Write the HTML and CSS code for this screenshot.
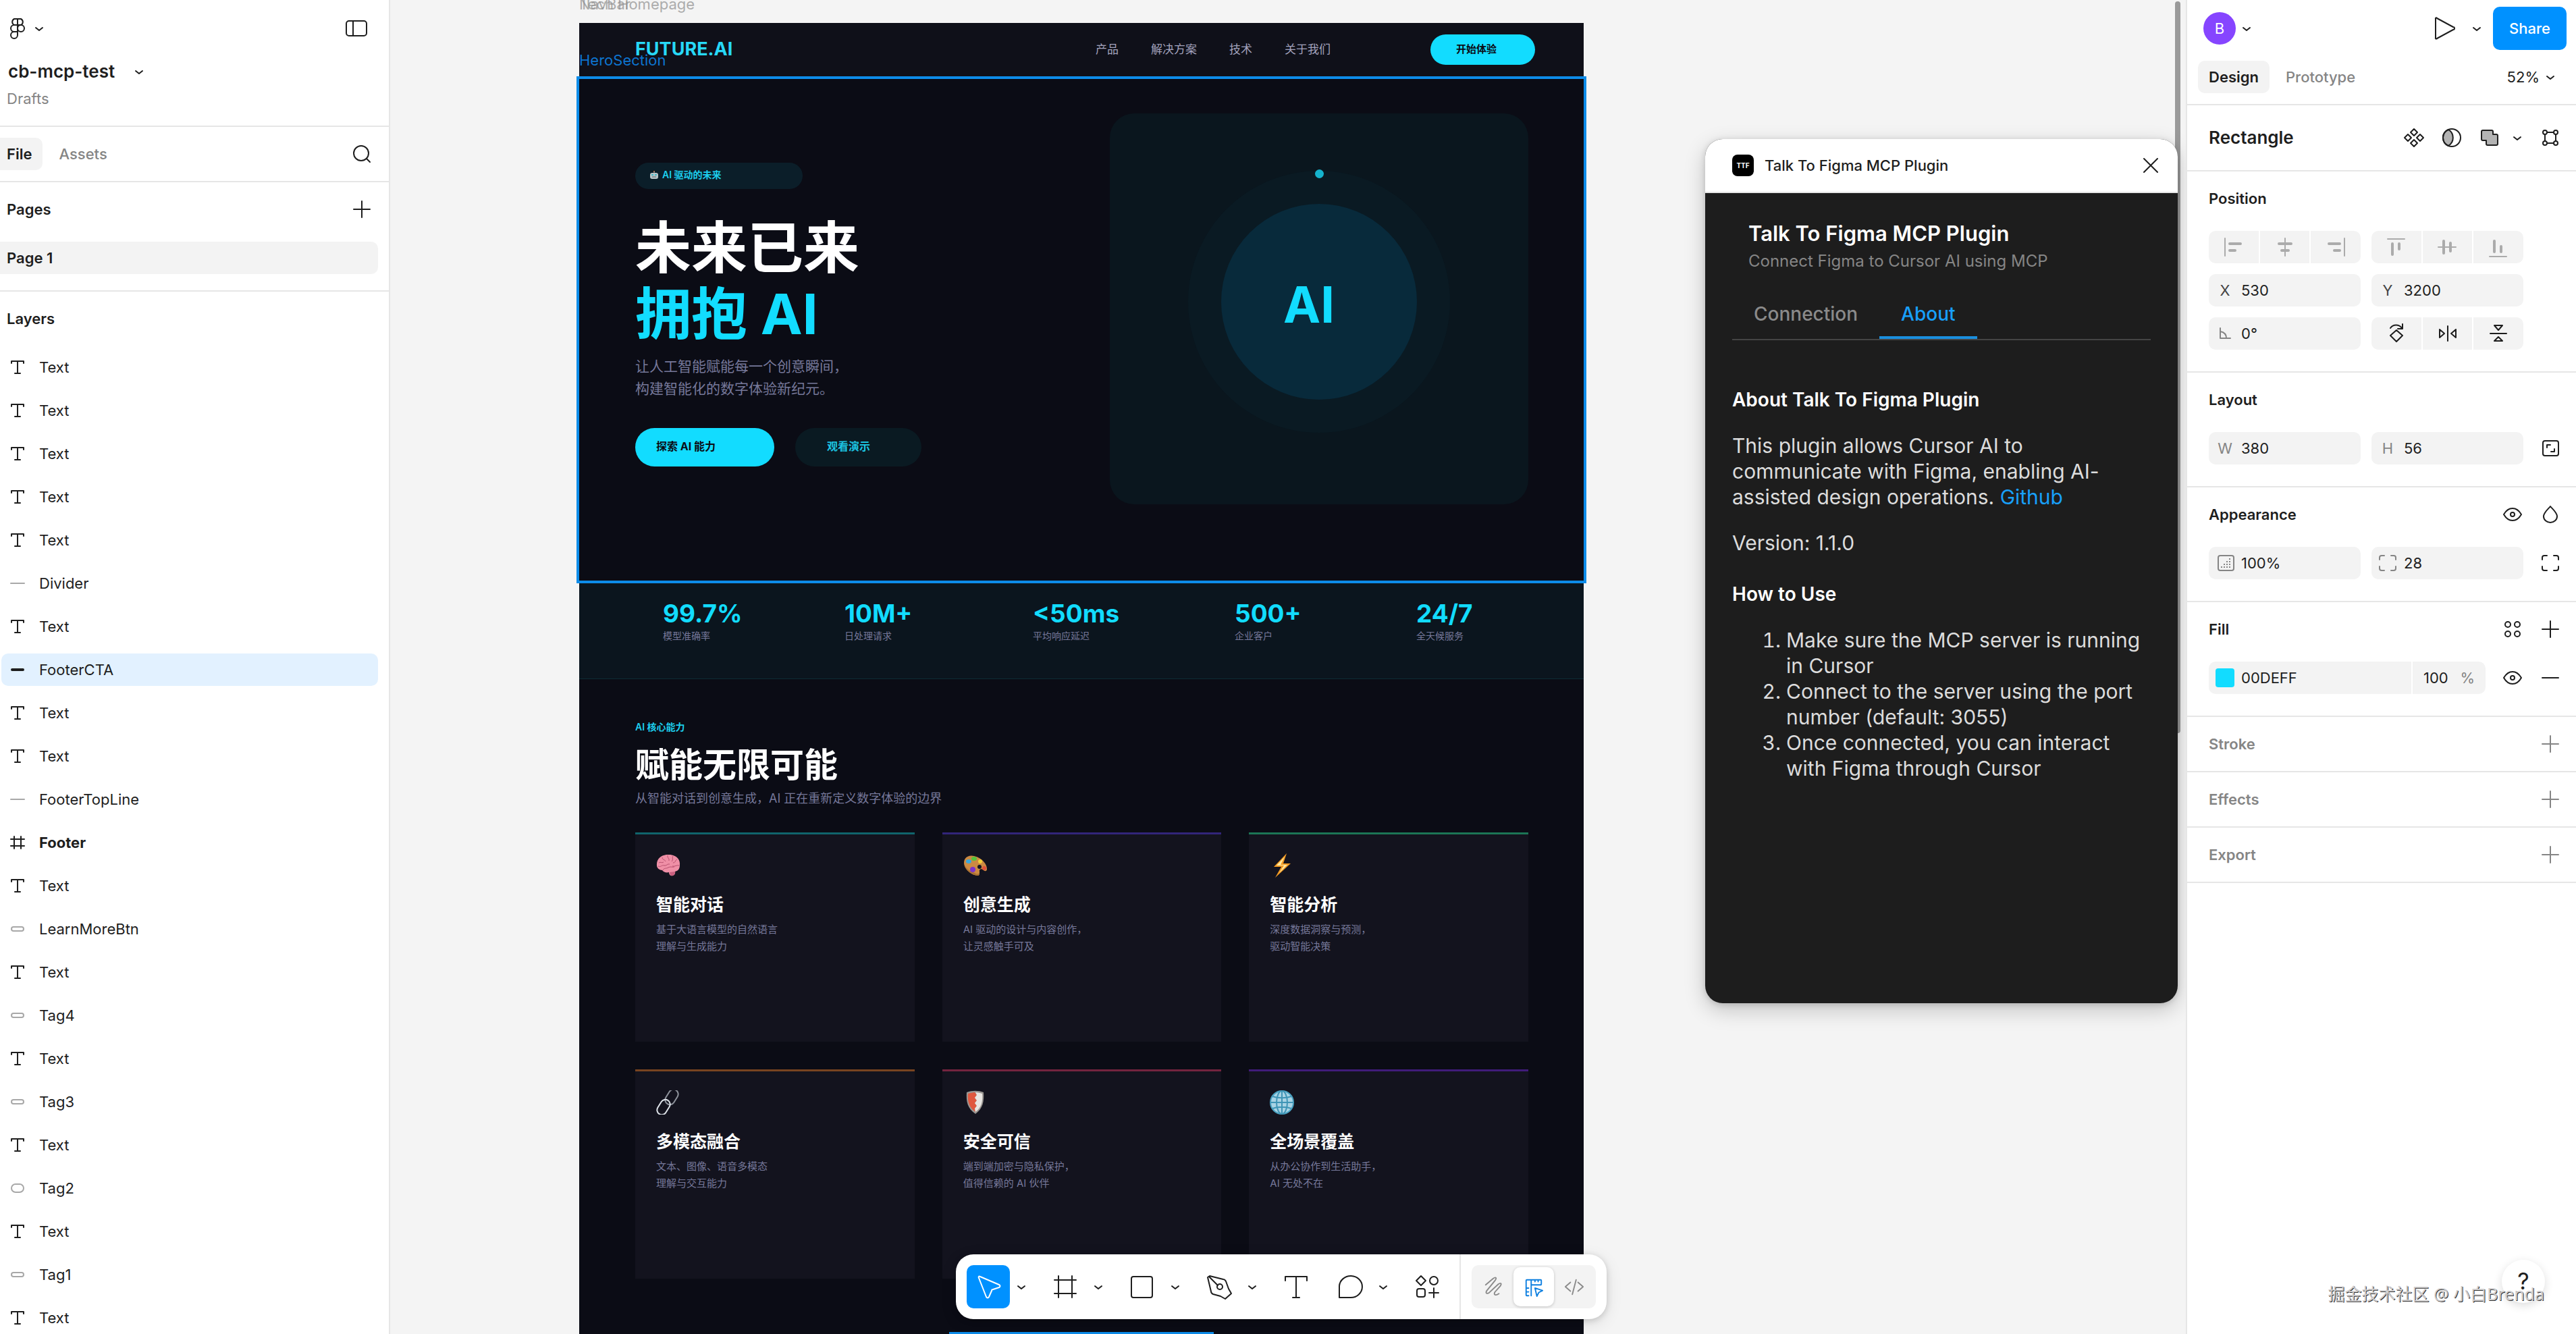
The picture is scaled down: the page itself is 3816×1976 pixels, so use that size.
FILE: index.html
```html
<!DOCTYPE html>
<html lang="zh-Hans">
<head>
  <meta charset="UTF-8">
  <title>cb-mcp-test</title>
  <link rel="stylesheet" href="styles.css">
</head>
<body>
  <svg class="sprite" aria-hidden="true">
    <symbol id="chevron" viewBox="0 0 32 32"><path d="M11 15l5 4 5-4"/></symbol>
    <symbol id="plus" viewBox="0 0 48 48"><path d="M24 12v24M12 24h24"/></symbol>
    <symbol id="minus" viewBox="0 0 48 48"><path d="M12 24h24"/></symbol>
    <symbol id="close" viewBox="0 0 48 48"><path d="M14 14l20 20M34 14L14 34"/></symbol>
    <symbol id="search" viewBox="0 0 48 48"><circle cx="23" cy="23" r="11"/><path d="M31 31l5 5"/></symbol>
    <symbol id="sidebar" viewBox="0 0 48 48"><rect x="9" y="13" width="30" height="22" rx="4"/><path d="M19 13v22"/></symbol>
    <symbol id="figma" viewBox="0 0 48 48"><path d="M24 10h-5a5 5 0 0 0 0 9h5zM24 10h5a5 5 0 0 1 0 9h-5zM24 19h-5a5 5 0 0 0 0 10h5zM24 29h-5a5 5 0 1 0 5 5z"/><circle cx="29" cy="24" r="5"/></symbol>

    <symbol id="l-text" viewBox="0 0 24 24"><path d="M3 6V3h18v3M12 3v18M8 21h8"/></symbol>
    <symbol id="l-line" viewBox="0 0 24 24"><path d="M2 12h20"/></symbol>
    <symbol id="l-bar" viewBox="0 0 24 24"><rect x="3" y="11" width="18" height="2" rx="1" fill="currentColor"/></symbol>
    <symbol id="l-pill" viewBox="0 0 24 24"><rect x="3" y="9" width="18" height="6" rx="3"/></symbol>
    <symbol id="l-round" viewBox="0 0 24 24"><rect x="3" y="6" width="18" height="12" rx="6"/></symbol>
    <symbol id="l-frame" viewBox="0 0 24 24"><path d="M7 3v18M17 3v18M2 7h20M2 17h20"/></symbol>

    <symbol id="component" viewBox="0 0 48 48"><path d="M24 11l5 5-5 5-5-5zM15 19l5 5-5 5-5-5zM33 19l5 5-5 5-5-5zM24 27l5 5-5 5-5-5z"/></symbol>
    <symbol id="mask" viewBox="0 0 48 48"><path class="soft" d="M19 12a13 13 0 0 0 0 24 14 14 0 0 0 0-24z"/><circle cx="24" cy="24" r="13"/></symbol>
    <symbol id="union" viewBox="0 0 48 48"><path class="soft" d="M14 13h13a2 2 0 0 1 2 2v4h5a2 2 0 0 1 2 2v12a2 2 0 0 1-2 2H21a2 2 0 0 1-2-2v-5h-5a2 2 0 0 1-2-2V15a2 2 0 0 1 2-2z"/></symbol>
    <symbol id="edit" viewBox="0 0 48 48"><circle cx="16" cy="16" r="3"/><circle cx="32" cy="16" r="3"/><circle cx="16" cy="32" r="3"/><circle cx="32" cy="32" r="3"/><path d="M19 16h10M19 32h10M16 19v10M32 19v10"/></symbol>
    <symbol id="al-left" viewBox="0 0 48 48"><path d="M11 11v26"/><path class="thick" d="M18 19h16M18 29h8"/></symbol>
    <symbol id="al-center" viewBox="0 0 48 48"><path d="M24 11v26"/><path class="thick" d="M15 19h18M19 29h10"/></symbol>
    <symbol id="al-right" viewBox="0 0 48 48"><path d="M37 11v26"/><path class="thick" d="M14 19h16M22 29h8"/></symbol>
    <symbol id="al-top" viewBox="0 0 48 48"><path d="M11 12h25"/><path class="thick" d="M18 19v16M28 19v8"/></symbol>
    <symbol id="al-middle" viewBox="0 0 48 48"><path d="M10 24h26"/><path class="thick" d="M18 15v18M28 18v12"/></symbol>
    <symbol id="al-bottom" viewBox="0 0 48 48"><path d="M11 38h25"/><path class="thick" d="M18 15v16M28 23v8"/></symbol>
    <symbol id="angle" viewBox="0 0 48 48"><path d="M17 16v15h15M17 21c6 1 9 5 9 10"/></symbol>
    <symbol id="rotate" viewBox="0 0 48 48"><path d="M24 19l9 8-9 9-9-9zM15 16c4-6 13-6 17 0M33 10v7h-7"/></symbol>
    <symbol id="flip-h" viewBox="0 0 48 48"><path d="M24 13v22M12 18v12l7-6zM36 18v12l-7-6z"/></symbol>
    <symbol id="flip-v" viewBox="0 0 48 48"><path d="M12 24h24M18 12h12l-6 7zM18 35h12l-6-6z"/></symbol>
    <symbol id="ratio" viewBox="0 0 48 48"><rect x="13" y="13" width="23" height="22" rx="3"/><path d="M19 23v-4h5M25 29h5v-4"/></symbol>
    <symbol id="eye" viewBox="0 0 48 48"><path d="M11 24c7-12 19-12 26 0-7 12-19 12-26 0z"/><circle cx="24" cy="24" r="3"/></symbol>
    <symbol id="drop" viewBox="0 0 48 48"><path d="M24 12c2 3 10 9 10 15a10 9 0 0 1-20 0c0-6 8-12 10-15z"/></symbol>
    <symbol id="opacity" viewBox="0 0 48 48"><rect x="14" y="13" width="23" height="22" rx="3"/><path class="dots" d="M18 30h15M22 26h11M26 22h7M30 18h3"/></symbol>
    <symbol id="corners" viewBox="0 0 48 48"><path d="M12 19v-3a3 3 0 0 1 3-3h4M29 13h4a3 3 0 0 1 3 3v3M36 29v3a3 3 0 0 1-3 3h-4M19 35h-4a3 3 0 0 1-3-3v-3"/></symbol>
    <symbol id="styles" viewBox="0 0 48 48"><circle cx="17" cy="17" r="4"/><circle cx="31" cy="17" r="4"/><circle cx="17" cy="31" r="4"/><circle cx="31" cy="31" r="4"/></symbol>
    <symbol id="play" viewBox="0 0 64 64"><path d="M19 18v28a1 1 0 0 0 2 1l24-13a2 2 0 0 0 0-4L21 17a1 1 0 0 0-2 1z"/></symbol>

    <symbol id="t-move" viewBox="0 0 64 64"><path d="M18 19c-1-2 0-3 2-2l28 12c2 1 2 3 0 4l-9 3c-1 0-2 1-2 2l-4 9c-1 2-3 2-4 0z"/></symbol>
    <symbol id="t-frame" viewBox="0 0 64 64"><path d="M22 16v32M42 16v32M16 22h32M16 42h32"/></symbol>
    <symbol id="t-rect" viewBox="0 0 64 64"><rect x="16" y="17" width="31" height="31" rx="3"/></symbol>
    <symbol id="t-pen" viewBox="0 0 64 64"><path d="M15 18l3-2 20 5c2 0 3 1 4 3l4 11 4 7-9 8-7-4-11-3c-2-1-3-2-3-4zM17 17l13 13"/><circle cx="33" cy="32" r="4"/></symbol>
    <symbol id="t-text" viewBox="0 0 64 64"><path d="M16 23v-6h32v6M32 17v31M27 48h10"/></symbol>
    <symbol id="t-note" viewBox="0 0 64 64"><path d="M16 48V31a17 16 0 1 1 17 17z"/></symbol>
    <symbol id="t-shapes" viewBox="0 0 64 64"><path d="M23 16l7 7-7 7-7-7zM42 34v14M35 41h14"/><circle cx="42" cy="23" r="6"/><rect x="17" y="35" width="12" height="12" rx="3"/></symbol>
    <symbol id="t-draw" viewBox="0 0 64 64"><path d="M20 29L32 19c4-3 6-1 3 3L22 38c-3 4 0 6 4 3l14-13c4-3 6-1 3 3l-8 9c-3 4 0 7 6 3"/></symbol>
    <symbol id="t-design" viewBox="0 0 64 64"><path d="M24 45h-3a1 1 0 0 1-1-1V21a1 1 0 0 1 1-1h22a1 1 0 0 1 1 1v6a1 1 0 0 1-1 1H28v17M28 20v8M34 20v3M39 20v3M20 33h4M20 39h4M34 33l12 4-6 3-3 6z"/></symbol>
    <symbol id="t-dev" viewBox="0 0 64 64"><path d="M26 25l-8 7 8 7M38 25l8 7-8 7M35 21l-6 23"/></symbol>
  </svg>

  <aside class="panel left">
    <header class="file-head">
      <div class="row">
        <button class="ib menu"><svg class="ic"><use href="#figma"/></svg></button>
        <button class="chev"><svg class="ic"><use href="#chevron"/></svg></button>
        <button class="ib end"><svg class="ic"><use href="#sidebar"/></svg></button>
      </div>
      <button class="file-name">cb-mcp-test <svg class="ic"><use href="#chevron"/></svg></button>
      <div class="drafts">Drafts</div>
    </header>
    <nav class="left-tabs">
      <button class="tab on">File</button>
      <button class="tab">Assets</button>
      <button class="ib end"><svg class="ic"><use href="#search"/></svg></button>
    </nav>
    <section class="pages">
      <div class="head"><h2>Pages</h2><button class="ib"><svg class="ic"><use href="#plus"/></svg></button></div>
      <div class="page on">Page 1</div>
    </section>
    <section class="layers">
      <div class="head"><h2>Layers</h2></div>
      <ul id="layers"></ul>
    </section>
  </aside>

  <main class="canvas">
    <div class="frame">
      <div class="frame-label">NavBar</div>
      <div class="frame-label">Tech Homepage</div>

      <div class="nav">
        <div class="brand">FUTURE.AI</div>
        <div class="links"><span>产品</span><span>解决方案</span><span>技术</span><span>关于我们</span></div>
        <button class="start">开始体验</button>
      </div>

      <div class="hero">
        <div class="hero-label">HeroSection</div>
        <div class="hero-text">
          <div class="badge">
            <svg class="bot" viewBox="0 0 14 14"><circle cx="7" cy="2" r="1" fill="#d9713a"/><path d="M7 2v3" stroke="#9fb0b5"/><rect x="1" y="4" width="12" height="9" rx="3" fill="#b9c4c8"/><rect x="3" y="6" width="3" height="2" rx="1" fill="#2fb7c9"/><rect x="8" y="6" width="3" height="2" rx="1" fill="#2fb7c9"/><path d="M4 10h6" stroke="#59686d"/></svg>
            AI 驱动的未来
          </div>
          <h1>未来已来<br><span>拥抱 AI</span></h1>
          <p>让人工智能赋能每一个创意瞬间，<br>构建智能化的数字体验新纪元。</p>
          <div class="cta">
            <button class="primary">探索 AI 能力</button>
            <button class="ghost">观看演示</button>
          </div>
        </div>
        <div class="art">
          <div class="orbit"><i class="dot"></i><div class="core">AI</div></div>
        </div>
      </div>

      <div class="stats">
        <div><b>99.7%</b><span>模型准确率</span></div>
        <div><b>10M+</b><span>日处理请求</span></div>
        <div><b>&lt;50ms</b><span>平均响应延迟</span></div>
        <div><b>500+</b><span>企业客户</span></div>
        <div><b>24/7</b><span>全天候服务</span></div>
      </div>

      <div class="features">
        <div class="eyebrow">AI 核心能力</div>
        <h2>赋能无限可能</h2>
        <p class="sub">从智能对话到创意生成，AI 正在重新定义数字体验的边界</p>
        <div class="cards">
          <div class="card teal">
            <svg class="emoji" viewBox="0 0 36 36"><path d="M1 18C0 8 8 2 17 2c11-1 19 6 18 15 0 7-3 9-7 10 1 3-1 6-4 6-3 1-5-2-5-5-4 1-8 0-10-3-4 0-8-3-8-7z" fill="#ef8fa6"/><path d="M20 28c0 4 2 6 5 5s3-4 3-6z" fill="#c9607f"/><path d="M4 14c3-2 4 1 7-1M9 6c0 4 4 3 5 6M17 3c-1 4 3 4 2 8M25 4c-2 3 1 5-2 8M31 9c-3 1-2 5-6 5M34 18c-4-1-6 2-10 1M10 25c2-4 5-2 8-4s6 0 9-1M3 19c4 2 5-2 9-1s4-3 8-2" fill="none" stroke="#b8506f"/></svg>
            <h3>智能对话</h3>
            <p>基于大语言模型的自然语言<br>理解与生成能力</p>
          </div>
          <div class="card indigo">
            <svg class="emoji" viewBox="0 0 36 36"><path d="M1 14C1 6 8 2 16 4c10 2 19 11 19 19 0 4-3 4-5 2-3-3-7-2-6 2 0 4 0 6-3 6C11 32 1 23 1 14z" fill="#cc8a42"/><path d="M2 17c2 8 10 15 19 16 2 0 3-2 3-4-2 2-4 2-7 0C10 27 4 22 2 17z" fill="#a86f33"/><ellipse cx="8" cy="12" rx="4" ry="3" fill="#39a7dd"/><ellipse cx="16" cy="8" rx="4" ry="3" fill="#55c23c"/><ellipse cx="25" cy="12" rx="3" ry="3" fill="#f3cf36"/><ellipse cx="31" cy="22" rx="3" ry="3" fill="#e0503b"/><ellipse cx="14" cy="24" rx="4" ry="4" fill="#7b34c9"/><circle cx="24" cy="20" r="3" fill="#151520"/></svg>
            <h3>创意生成</h3>
            <p>AI 驱动的设计与内容创作，<br>让灵感触手可及</p>
          </div>
          <div class="card green">
            <svg class="emoji" viewBox="0 0 36 36"><path d="M25 0L6 20h11L8 36 31 15H20z" fill="#f39a23"/><path d="M22 5L10 18h11l-7 11 12-12H16z" fill="#ffe9a0"/></svg>
            <h3>智能分析</h3>
            <p>深度数据洞察与预测，<br>驱动智能决策</p>
          </div>
          <div class="card orange">
            <svg class="emoji" viewBox="0 0 36 36" fill="none"><g stroke="#8e939c" stroke-width="2"><rect x="16" y="-2" width="14" height="24" rx="7" transform="rotate(32 23 10)"/></g><g stroke="#dfe4ea" stroke-width="2"><rect x="4" y="13" width="14" height="24" rx="7" transform="rotate(32 11 25)"/></g></svg>
            <h3>多模态融合</h3>
            <p>文本、图像、语音多模态<br>理解与交互能力</p>
          </div>
          <div class="card red">
            <svg class="emoji" viewBox="0 0 36 36"><path d="M5 3c8-3 17-3 25 0 1 13-1 24-12 32C6 27 4 16 5 3z" fill="#9a9692"/><path d="M7 5c4-1 7-2 10-2l3 4-3 4 3 4-3 4 3 4-3 4 1 5C9 26 6 17 7 5z" fill="#e0583f"/><path d="M18 3c4 0 7 1 10 2 1 11-1 21-10 27l-1-5 3-4-3-4 3-4-3-4 3-4z" fill="#e9e6e2"/></svg>
            <h3>安全可信</h3>
            <p>端到端加密与隐私保护，<br>值得信赖的 AI 伙伴</p>
          </div>
          <div class="card violet">
            <svg class="emoji" viewBox="0 0 36 36" fill="none"><circle cx="18" cy="18" r="17" fill="#a9d3e4" stroke="#4ba3c3" stroke-width="2"/><path d="M1 18h34M4 9c8 3 20 3 28 0M4 27c8-3 20-3 28 0M18 1v34" stroke="#3f95b6" stroke-width="2"/><ellipse cx="18" cy="18" rx="8" ry="17" stroke="#3f95b6" stroke-width="2"/></svg>
            <h3>全场景覆盖</h3>
            <p>从办公协作到生活助手，<br>AI 无处不在</p>
          </div>
        </div>
      </div>
      <div class="footer"><div class="footer-cta"></div></div>
    </div>

    <div class="scrollbar"></div>

    <section class="plugin">
      <header>
        <span class="logo">TTF</span>
        <span class="name">Talk To Figma MCP Plugin</span>
        <button class="ib end" aria-label="Close"><svg class="ic"><use href="#close"/></svg></button>
      </header>
      <div class="plugin-body">
        <h1>Talk To Figma MCP Plugin</h1>
        <p class="lead">Connect Figma to Cursor AI using MCP</p>
        <div class="plugin-tabs">
          <button>Connection</button>
          <button class="on">About</button>
        </div>
        <h2>About Talk To Figma Plugin</h2>
        <p>This plugin allows Cursor AI to communicate with Figma, enabling AI-assisted design operations. <a href="#">Github</a></p>
        <p>Version: 1.1.0</p>
        <h2 class="how">How to Use</h2>
        <ol>
          <li>Make sure the MCP server is running in Cursor</li>
          <li>Connect to the server using the port number (default: 3055)</li>
          <li>Once connected, you can interact with Figma through Cursor</li>
        </ol>
      </div>
    </section>

    <div class="dock">
      <div class="toolbar">
        <div class="tool"><button class="on"><svg class="ic"><use href="#t-move"/></svg></button><button class="more"><svg class="ic"><use href="#chevron"/></svg></button></div>
        <div class="tool"><button><svg class="ic"><use href="#t-frame"/></svg></button><button class="more"><svg class="ic"><use href="#chevron"/></svg></button></div>
        <div class="tool"><button><svg class="ic"><use href="#t-rect"/></svg></button><button class="more"><svg class="ic"><use href="#chevron"/></svg></button></div>
        <div class="tool"><button><svg class="ic"><use href="#t-pen"/></svg></button><button class="more"><svg class="ic"><use href="#chevron"/></svg></button></div>
        <div class="tool"><button><svg class="ic"><use href="#t-text"/></svg></button></div>
        <div class="tool"><button><svg class="ic"><use href="#t-note"/></svg></button><button class="more"><svg class="ic"><use href="#chevron"/></svg></button></div>
        <div class="tool"><button><svg class="ic"><use href="#t-shapes"/></svg></button></div>
        <div class="rule"></div>
        <div class="modes">
          <button><svg class="ic"><use href="#t-draw"/></svg></button>
          <button class="on"><svg class="ic"><use href="#t-design"/></svg></button>
          <button><svg class="ic"><use href="#t-dev"/></svg></button>
        </div>
      </div>
    </div>
  </main>

  <aside class="panel right">
    <header class="right-head">
      <div class="row">
        <span class="avatar">B</span>
        <button class="chev"><svg class="ic"><use href="#chevron"/></svg></button>
        <button class="play end"><svg class="ic"><use href="#play"/></svg></button>
        <button class="chev"><svg class="ic"><use href="#chevron"/></svg></button>
        <button class="share">Share</button>
      </div>
      <div class="right-tabs">
        <button class="tab on">Design</button>
        <button class="tab">Prototype</button>
        <button class="zoom end">52%<svg class="ic"><use href="#chevron"/></svg></button>
      </div>
    </header>

    <section class="node">
      <h1>Rectangle</h1>
      <button class="ib"><svg class="ic"><use href="#component"/></svg></button>
      <button class="ib"><svg class="ic"><use href="#mask"/></svg></button>
      <div class="pair">
        <button class="ib"><svg class="ic"><use href="#union"/></svg></button>
        <button class="more"><svg class="ic"><use href="#chevron"/></svg></button>
      </div>
      <button class="ib"><svg class="ic"><use href="#edit"/></svg></button>
    </section>

    <section class="group">
      <div class="head"><h2>Position</h2></div>
      <div class="line">
        <div class="seg muted">
          <button><svg class="ic"><use href="#al-left"/></svg></button>
          <button><svg class="ic"><use href="#al-center"/></svg></button>
          <button><svg class="ic"><use href="#al-right"/></svg></button>
        </div>
        <div class="seg muted">
          <button><svg class="ic"><use href="#al-top"/></svg></button>
          <button><svg class="ic"><use href="#al-middle"/></svg></button>
          <button><svg class="ic"><use href="#al-bottom"/></svg></button>
        </div>
        <span class="slot"></span>
      </div>
      <div class="line">
        <label class="field dark"><span>X</span><input value="530"></label>
        <label class="field dark"><span>Y</span><input value="3200"></label>
        <span class="slot"></span>
      </div>
      <div class="line">
        <label class="field"><span><svg class="ic"><use href="#angle"/></svg></span><input value="0°" aria-label="Rotation"></label>
        <div class="seg">
          <button><svg class="ic"><use href="#rotate"/></svg></button>
          <button><svg class="ic"><use href="#flip-h"/></svg></button>
          <button><svg class="ic"><use href="#flip-v"/></svg></button>
        </div>
        <span class="slot"></span>
      </div>
    </section>

    <section class="group">
      <div class="head"><h2>Layout</h2></div>
      <div class="line">
        <label class="field"><span>W</span><input value="380"></label>
        <label class="field"><span>H</span><input value="56"></label>
        <button class="ib"><svg class="ic"><use href="#ratio"/></svg></button>
      </div>
    </section>

    <section class="group">
      <div class="head">
        <h2>Appearance</h2>
        <button class="ib"><svg class="ic"><use href="#eye"/></svg></button>
        <button class="ib"><svg class="ic"><use href="#drop"/></svg></button>
      </div>
      <div class="line">
        <label class="field"><span><svg class="ic"><use href="#opacity"/></svg></span><input value="100%" aria-label="Opacity"></label>
        <label class="field"><span><svg class="ic"><use href="#corners"/></svg></span><input value="28" aria-label="Corner radius"></label>
        <button class="ib"><svg class="ic"><use href="#corners"/></svg></button>
      </div>
    </section>

    <section class="group">
      <div class="head">
        <h2>Fill</h2>
        <button class="ib"><svg class="ic"><use href="#styles"/></svg></button>
        <button class="ib"><svg class="ic"><use href="#plus"/></svg></button>
      </div>
      <div class="line fill">
        <div class="paint">
          <label class="hex"><i class="swatch"></i><input value="00DEFF" aria-label="Fill color"></label>
          <label class="alpha"><input value="100" aria-label="Fill opacity"><span>%</span></label>
        </div>
        <div class="pair gap">
          <button class="ib"><svg class="ic"><use href="#eye"/></svg></button>
          <button class="ib"><svg class="ic"><use href="#minus"/></svg></button>
        </div>
      </div>
    </section>

    <section class="group closed"><div class="head"><h2>Stroke</h2><button class="ib"><svg class="ic"><use href="#plus"/></svg></button></div></section>
    <section class="group closed"><div class="head"><h2>Effects</h2><button class="ib"><svg class="ic"><use href="#plus"/></svg></button></div></section>
    <section class="group closed"><div class="head"><h2>Export</h2><button class="ib"><svg class="ic"><use href="#plus"/></svg></button></div></section>

    <button class="help">?</button>
    <div class="watermark">掘金技术社区 @ 小白Brenda</div>
  </aside>

  <script>
    const layers = [
      ['text', 'Text'], ['text', 'Text'], ['text', 'Text'], ['text', 'Text'], ['text', 'Text'],
      ['line', 'Divider'], ['text', 'Text'], ['bar', 'FooterCTA'], ['text', 'Text'], ['text', 'Text'],
      ['line', 'FooterTopLine'], ['frame', 'Footer'], ['text', 'Text'], ['pill', 'LearnMoreBtn'],
      ['text', 'Text'], ['pill', 'Tag4'], ['text', 'Text'], ['pill', 'Tag3'], ['text', 'Text'],
      ['round', 'Tag2'], ['text', 'Text'], ['pill', 'Tag1'], ['text', 'Text']
    ];

    document.getElementById('layers').innerHTML = layers.map(([type, name]) =>
      `<li class="layer is-${type}"><svg class="ic"><use href="#l-${type}"/></svg>${name}</li>`
    ).join('');
  </script>
</body>
</html>
```

FILE: styles.css
```css
* {
  box-sizing: border-box;
}

body {
  margin: 0;
  height: 100vh;
  display: flex;
  overflow: hidden;
  font-family: Inter, "Noto Sans CJK SC", sans-serif;
  font-size: 22px;
  line-height: 32px;
  color: #1e1e1e;
  background: #fff;
}

h1, h2, h3, p, ul, ol {
  margin: 0;
  padding: 0;
  font-size: inherit;
}

ul { list-style: none; }

button {
  border: 0;
  padding: 0;
  background: none;
  color: inherit;
  font: inherit;
  cursor: pointer;
}

input {
  border: 0;
  padding: 0;
  width: 0;
  min-width: 0;
  flex: 1;
  background: none;
  color: #1e1e1e;
  font: inherit;
  outline: none;
}

.sprite {
  position: absolute;
  width: 0;
  height: 0;
}

.ic {
  display: block;
  width: 48px;
  height: 48px;
  flex: none;
  fill: none;
  stroke: currentColor;
  stroke-width: 2;
  stroke-linecap: round;
  stroke-linejoin: round;
}

.soft { fill: #b3b3b3; }
.thick { stroke-width: 4; }
.dots { stroke-dasharray: 2 2; stroke-linecap: butt; }

.ib { width: 48px; height: 48px; flex: none; }
.chev, .chev .ic { width: 32px; height: 32px; flex: none; }
.more { width: 34px; display: flex; justify-content: center; align-items: center; }
.more .ic { width: 32px; height: 32px; }
.end { margin-left: auto; }

/* side panels */
.panel {
  width: 578px;
  flex: none;
  background: #fff;
  position: relative;
}

.left { border-right: 2px solid #e6e6e6; }
.right { border-left: 2px solid #e6e6e6; }

.row { display: flex; align-items: center; height: 64px; }

.head { display: flex; align-items: center; height: 80px; gap: 8px; }
.head h2 { flex: 1; font-weight: 600; }

.tab {
  height: 48px;
  padding: 0 16px;
  border-radius: 10px;
  color: #858585;
  font-weight: 500;
}

.tab.on { background: #f3f3f3; color: #1e1e1e; font-weight: 600; }

.file-head {
  height: 188px;
  padding: 10px 24px 0 2px;
  border-bottom: 2px solid #e6e6e6;
}

.menu { margin-right: -8px; }

.file-name {
  display: flex;
  align-items: center;
  gap: 20px;
  margin-top: 8px;
  height: 48px;
  padding-left: 10px;
  font-size: 26px;
  font-weight: 600;
}

.file-name .ic { width: 32px; height: 32px; }
.drafts { padding-left: 8px; color: #858585; }

.left-tabs {
  display: flex;
  align-items: center;
  gap: 8px;
  height: 82px;
  padding-right: 16px;
  border-bottom: 2px solid #e6e6e6;
}

.left-tabs .on { padding-left: 10px; border-radius: 0 10px 10px 0; }

.pages { height: 162px; border-bottom: 2px solid #e6e6e6; }
.left .head { padding: 0 16px 0 10px; }

.page {
  margin: 8px 16px 0 0;
  padding: 0 10px;
  line-height: 48px;
  font-weight: 600;
  border-radius: 0 10px 10px 0;
  background: #f3f3f3;
}

.layers ul { display: grid; gap: 16px; margin: 8px 16px 0 2px; }

.layer {
  display: flex;
  align-items: center;
  gap: 20px;
  height: 48px;
  padding-left: 12px;
  border-radius: 10px;
}

.layer .ic { width: 24px; height: 24px; }
.is-line .ic, .is-pill .ic, .is-round .ic { color: #a8a8a8; }
.is-bar { background: #e2f1ff; }
.is-frame { font-weight: 700; }

/* canvas */
.canvas {
  flex: 1;
  position: relative;
  overflow: hidden;
  background: #f4f4f4;
}

.frame {
  position: absolute;
  left: 280px;
  top: 34px;
  width: 1488px;
  background: #0b0c15;
  color: #fff;
}

.frame-label {
  position: absolute;
  left: 0;
  top: -44px;
  color: #8e8e8e;
  opacity: .7;
}

.nav {
  display: flex;
  align-items: center;
  height: 83px;
  padding: 0 72px 5px 83px;
  background: #0f1019;
}

.brand { flex: 1; font-size: 27px; font-weight: 700; color: #27d9f7; }

.links { display: flex; gap: 48px; margin-right: 148px; font-size: 17px; color: #a3a3bd; }

.start {
  width: 155px;
  height: 45px;
  padding-left: 38px;
  text-align: left;
  border-radius: 23px;
  background: #12dcff;
  color: #0b0c15;
  font-size: 15px;
  font-weight: 700;
}

.hero {
  position: relative;
  display: flex;
  justify-content: space-between;
  align-items: flex-start;
  height: 743px;
  padding: 0 82px 0 83px;
  outline: 4px solid #0d8ce9;
}

.hero-label {
  position: absolute;
  left: 0;
  top: -44px;
  color: #0d74cf;
}

.hero-text { padding-top: 124px; }

.badge {
  display: flex;
  align-items: center;
  gap: 5px;
  width: 248px;
  height: 39px;
  padding: 0 0 4px 21px;
  border-radius: 20px;
  background: #0b1e29;
  color: #1ccfee;
  font-size: 14px;
  font-weight: 600;
}

.bot { width: 14px; height: 14px; }

.hero h1 {
  margin-top: 38px;
  font-size: 83px;
  line-height: 98px;
  font-weight: 700;
}

.hero h1 span { color: #12dcff; }

.hero p {
  margin-top: 12px;
  font-size: 21px;
  line-height: 33px;
  color: #76789a;
}

.cta { display: flex; gap: 31px; margin-top: 42px; font-size: 16px; }

.cta button {
  height: 57px;
  padding-bottom: 4px;
  border-radius: 29px;
  text-align: left;
  font-weight: 700;
}

.cta .primary { width: 206px; padding-left: 31px; background: #12dcff; color: #0b0c15; }
.cta .ghost { width: 187px; padding-left: 47px; background: #0a1a22; color: #1cc4e2; }

.art {
  width: 620px;
  height: 579px;
  margin-top: 51px;
  padding-top: 85px;
  border-radius: 36px;
  background: #0a161e;
}

.orbit {
  position: relative;
  display: flex;
  align-items: center;
  width: 388px;
  height: 388px;
  margin: 0 auto;
  padding-left: 49px;
  border-radius: 50%;
  background: #0a1a23;
}

.dot {
  position: absolute;
  left: 188px;
  top: -2px;
  width: 13px;
  height: 13px;
  border-radius: 50%;
  background: #15b3cd;
}

.core {
  width: 290px;
  height: 290px;
  padding: 4px 0 0 92px;
  border-radius: 50%;
  background: #082a3b;
  color: #12dcff;
  font-size: 74px;
  line-height: 290px;
  font-weight: 700;
}

.stats {
  display: grid;
  grid-template-columns: 269px 279px 299px 269px auto;
  height: 146px;
  padding: 27px 0 0 124px;
  border-bottom: 1px solid #0c2c35;
  background: #0b151e;
}

.stats b { display: block; font-size: 37px; line-height: 44px; color: #12dcff; }
.stats span { display: block; font-size: 14px; line-height: 22px; color: #76789a; }

.features { padding: 61px 82px 0 83px; }
.eyebrow { font-size: 14px; line-height: 20px; font-weight: 600; color: #1ccfee; }
.features h2 { margin-top: 16px; font-size: 50px; line-height: 60px; }
.sub { margin-top: 8px; font-size: 18px; line-height: 24px; color: #76789a; }

.cards {
  display: grid;
  grid-template-columns: repeat(3, 1fr);
  gap: 41px;
  margin-top: 38px;
}

.card {
  min-height: 310px;
  padding: 28px 31px;
  border-top: 3px solid;
  background: #13131e;
}

.teal { border-color: #10646c; }
.indigo { border-color: #32257a; }
.green { border-color: #1c7555; }
.orange { border-color: #784420; }
.red { border-color: #74243f; }
.violet { border-color: #401c7a; }

.emoji { display: block; width: 36px; height: 36px; }
.card h3 { margin-top: 24px; font-size: 25px; line-height: 32px; }
.card p { margin-top: 8px; font-size: 15px; line-height: 25px; color: #76789a; }

.footer { padding: 79px 0 80px 548px; }
.footer-cta { width: 392px; height: 58px; background: #12dcff; border: 4px solid #0d8ce9; }

.scrollbar {
  position: absolute;
  right: 8px;
  top: 2px;
  width: 8px;
  height: 1084px;
  border-radius: 4px;
  background: #9a9a9a;
}

/* plugin window */
.plugin {
  position: absolute;
  right: 12px;
  top: 206px;
  width: 700px;
  height: 1280px;
  border-radius: 26px;
  overflow: hidden;
  background: #1d1d1d;
  box-shadow: 0 10px 32px rgba(0, 0, 0, .2), 0 2px 10px rgba(0, 0, 0, .15);
}

.plugin header {
  display: flex;
  align-items: center;
  height: 80px;
  padding: 0 16px 0 40px;
  border-bottom: 2px solid #e6e6e6;
  background: #fff;
}

.logo {
  width: 32px;
  line-height: 32px;
  text-align: center;
  border-radius: 8px;
  background: #000;
  color: #fff;
  font-size: 10px;
  font-weight: 700;
}

.name { margin-left: 16px; font-weight: 500; }

.plugin-body {
  padding: 40px 40px 0;
  color: #dcdcdc;
  font-size: 30px;
  line-height: 38px;
}

.plugin-body h1 { padding-left: 24px; font-size: 31px; line-height: 40px; font-weight: 600; color: #fff; }
.plugin-body .lead { margin: 0; padding-left: 24px; font-size: 24px; line-height: 42px; color: #858585; }

.plugin-tabs { display: flex; margin-top: 20px; border-bottom: 2px solid #444; }

.plugin-tabs button {
  height: 74px;
  padding: 3px 32px 0;
  border-bottom: 4px solid transparent;
  font-size: 28px;
  font-weight: 500;
  color: #8a8a8a;
}

.plugin-tabs .on { color: #18a0fb; border-color: #1a8fde; }

.plugin-body h2 { margin-top: 69px; font-size: 28px; font-weight: 600; color: #fff; }
.plugin-body p { margin-top: 30px; }
.plugin-body a { color: #18a0fb; text-decoration: none; }
.plugin-body .how { margin-top: 38px; }
.plugin-body ol { margin-top: 30px; padding-left: 80px; }

/* bottom toolbar */
.dock {
  position: absolute;
  left: 0;
  right: 20px;
  bottom: 22px;
  display: flex;
  justify-content: center;
}

.toolbar {
  display: flex;
  gap: 16px;
  padding: 16px;
  border-radius: 26px;
  background: #fff;
  box-shadow: 0 2px 10px rgba(0, 0, 0, .16), 0 6px 24px rgba(0, 0, 0, .1);
}

.tool { display: flex; }
.tool button:first-child, .modes button { width: 64px; height: 64px; border-radius: 10px; }
.tool button:first-child .ic { width: 64px; height: 64px; }
.tool .on { background: #0091ff; color: #fff; }
.rule { width: 2px; margin: -16px 0; background: #e6e6e6; }
.modes { display: flex; align-items: center; padding: 0 2px; border-radius: 10px; background: #f3f3f3; color: #8a8a8a; }
.modes button { width: 60px; }
.modes .ic { width: 60px; height: 60px; }
.modes .on { height: 58px; background: #fff; color: #0d7fe0; box-shadow: 0 1px 4px rgba(0, 0, 0, .2); }

/* design panel */
.right-head {
  height: 156px;
  padding: 10px 14px 0 16px;
  border-bottom: 2px solid #e6e6e6;
}

.right-head .row { padding-left: 8px; }

.avatar {
  width: 48px;
  line-height: 48px;
  text-align: center;
  border-radius: 50%;
  background: #8645ff;
  color: #fff;
}

.play, .play .ic { width: 64px; height: 64px; }

.share {
  width: 109px;
  height: 64px;
  margin-left: 8px;
  border-radius: 10px;
  background: #0091ff;
  color: #fff;
  font-weight: 500;
}

.right-tabs { display: flex; align-items: center; gap: 8px; margin-top: 16px; }
.zoom { display: flex; align-items: center; padding-right: 8px; }
.zoom .ic { width: 32px; height: 32px; }

.node {
  display: flex;
  align-items: center;
  gap: 8px;
  height: 98px;
  padding: 0 14px 0 32px;
  border-bottom: 2px solid #e6e6e6;
}

.node h1 { flex: 1; font-size: 26px; font-weight: 600; }
.pair { display: flex; }
.pair.gap { gap: 8px; }

.group { padding: 0 14px 32px 32px; border-bottom: 2px solid #e6e6e6; }
.group.closed { padding-bottom: 0; color: #858585; }

.group .line { display: flex; gap: 16px; margin-top: 16px; }
.group .head + .line { margin-top: 8px; }
.slot { width: 48px; flex: none; }

.seg { display: flex; flex: 1; gap: 2px; border-radius: 10px; overflow: hidden; }
.seg button { flex: 1; display: flex; justify-content: center; height: 48px; background: #f3f3f3; }
.muted { color: #ababab; }

.field {
  display: flex;
  align-items: center;
  flex: 1;
  height: 48px;
  min-width: 0;
  border-radius: 10px;
  background: #f3f3f3;
  color: #858585;
}

.field.dark { color: #444; }
.field span { width: 48px; display: flex; justify-content: center; }

.paint { display: flex; flex: 1; gap: 2px; height: 48px; border-radius: 10px; overflow: hidden; }
.hex, .alpha { display: flex; align-items: center; background: #f3f3f3; }
.hex { flex: 1; padding-left: 10px; }
.swatch { width: 28px; height: 28px; margin-right: 10px; border-radius: 4px; background: #12dcff; }
.alpha { flex: none; width: 108px; padding: 0 16px; color: #858585; }

/* sits over the panel corner */
.help {
  position: absolute;
  right: 46px;
  bottom: 46px;
  width: 64px;
  height: 64px;
  border-radius: 50%;
  background: #fff;
  font-size: 34px;
  box-shadow: 0 4px 14px rgba(0, 0, 0, .14);
}

.watermark {
  position: absolute;
  right: 47px;
  bottom: 44px;
  font-family: "Noto Sans", "Noto Sans CJK SC", sans-serif;
  font-size: 25px;
  white-space: nowrap;
  color: #d0cecf;
  text-shadow: 1px 1px 0 #333;
}
```
